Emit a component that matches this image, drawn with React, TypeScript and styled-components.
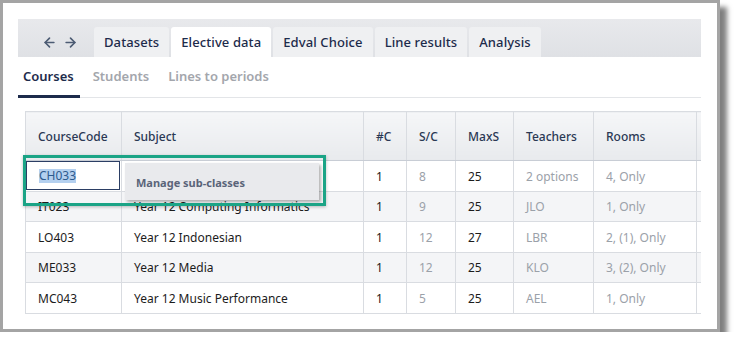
import styled, { createGlobalStyle } from "styled-components";
import { ArrowLeft, ArrowRight } from "lucide-react";

const GlobalStyle = createGlobalStyle`
  * { box-sizing: border-box; }
  body {
    margin: 0;
    background: #ffffff;
    font-family: "Noto Sans", "Open Sans", sans-serif;
  }
`;

interface Course {
  code: string;
  subject: string;
  classes: number;
  perClass: number;
  maxS: number;
  teachers: string;
  rooms: string;
}

const courses: Course[] = [
  { code: "CH033", subject: "", classes: 1, perClass: 8, maxS: 25, teachers: "2 options", rooms: "4, Only" },
  { code: "IT023", subject: "Year 12 Computing Informatics", classes: 1, perClass: 9, maxS: 25, teachers: "JLO", rooms: "1, Only" },
  { code: "LO403", subject: "Year 12 Indonesian", classes: 1, perClass: 12, maxS: 27, teachers: "LBR", rooms: "2, (1), Only" },
  { code: "ME033", subject: "Year 12 Media", classes: 1, perClass: 12, maxS: 25, teachers: "KLO", rooms: "3, (2), Only" },
  { code: "MC043", subject: "Year 12 Music Performance", classes: 1, perClass: 5, maxS: 25, teachers: "AEL", rooms: "1, Only" },
];

const tabs = ["Datasets", "Elective data", "Edval Choice", "Line results", "Analysis"];
const subTabs = ["Courses", "Students", "Lines to periods"];
const columns = ["CourseCode", "Subject", "#C", "S/C", "MaxS", "Teachers", "Rooms", ""];
const widths = [96, 242, 43, 49, 58, 80, 103, 80];

function App() {
  return (
    <>
      <GlobalStyle />
      <Frame>
        <TabBar>
          <NavArrows>
            <ArrowLeft size={15} strokeWidth={2.6} />
            <ArrowRight size={15} strokeWidth={2.6} />
          </NavArrows>
          <Tabs>
            {tabs.map((t) => (
              <Tab key={t} $active={t === "Elective data"}>
                {t}
              </Tab>
            ))}
          </Tabs>
        </TabBar>
        <SubTabs>
          {subTabs.map((t) => (
            <SubTab key={t} $active={t === "Courses"}>
              {t}
            </SubTab>
          ))}
        </SubTabs>
        <TableArea>
          <TableClip>
            <Table>
              <colgroup>
                {widths.map((w, i) => (
                  <col key={i} style={{ width: w }} />
                ))}
              </colgroup>
              <thead>
                <tr>
                  {columns.map((c, i) => (
                    <Th key={i}>{c}</Th>
                  ))}
                </tr>
              </thead>
              <tbody>
                {courses.map((c, i) => (
                  <Row key={c.code} $striped={i % 2 === 1}>
                    <Td>
                      {i === 0 ? (
                        <SelectedCell>
                          <Selection>{c.code}</Selection>
                        </SelectedCell>
                      ) : (
                        c.code
                      )}
                    </Td>
                    <Td>{c.subject}</Td>
                    <Td>{c.classes}</Td>
                    <Td $muted>{c.perClass}</Td>
                    <Td>{c.maxS}</Td>
                    <Td $muted>{c.teachers}</Td>
                    <Td $muted>{c.rooms}</Td>
                    <Td />
                  </Row>
                ))}
              </tbody>
            </Table>
          </TableClip>
          <ContextMenu>Manage sub-classes</ContextMenu>
          <Highlight />
        </TableArea>
      </Frame>
    </>
  );
}

export default App;

const Frame = styled.div`
  width: 720px;
  height: 332px;
  border: 3px solid #a4a4a4;
  background: #ffffff;
  box-shadow: 7px 7px 5px rgba(0, 0, 0, 0.5);
  padding: 16px 16px 0 15px;
`;

const TabBar = styled.div`
  display: flex;
  align-items: flex-end;
  height: 38px;
  background: linear-gradient(to bottom, #e8e9ec, #dfe1e5);
  padding-left: 24px;
`;

const NavArrows = styled.div`
  display: flex;
  align-items: center;
  gap: 6px;
  height: 30px;
  color: #4c5b73;
  margin-right: 16px;
`;

const Tabs = styled.div`
  display: flex;
  gap: 2px;
`;

const Tab = styled.div<{ $active?: boolean }>`
  height: 30px;
  display: flex;
  align-items: center;
  padding: 0 10px;
  border-radius: 3px 3px 0 0;
  background: ${(p) => (p.$active ? "#ffffff" : "#eff0f2")};
  color: #1d2b4b;
  font-size: 13px;
  font-weight: 500;
  letter-spacing: 0.1px;
`;

const SubTabs = styled.div`
  display: flex;
  gap: 8px;
  height: 41px;
  border-bottom: 1px solid #e3e5e8;
`;

const SubTab = styled.div<{ $active?: boolean }>`
  display: flex;
  align-items: center;
  padding: 0 6px 0 5px;
  font-size: 13px;
  font-weight: 600;
  color: ${(p) => (p.$active ? "#1d2b4b" : "#a3a6ac")};
  border-bottom: 3px solid ${(p) => (p.$active ? "#1d2b4b" : "transparent")};
  margin-bottom: -1px;
`;

const TableArea = styled.div`
  position: relative;
  margin: 13px 0 0 7px;
`;

const TableClip = styled.div`
  overflow: hidden;
  width: 676px;
`;

const Table = styled.table`
  table-layout: fixed;
  width: 751px;
  border-collapse: collapse;
  font-size: 12px;
`;

const Th = styled.th`
  height: 49px;
  text-align: left;
  font-weight: 500;
  color: #2a3854;
  padding: 0 12px;
  background: linear-gradient(to bottom, #f5f6f8, #e8eaed);
  border: 1px solid #d9dce1;
  border-bottom-color: #c8cdd5;
`;

const Row = styled.tr<{ $striped?: boolean }>`
  height: 30.5px;
  background: ${(p) => (p.$striped ? "#f4f5f7" : "#ffffff")};
`;

const Td = styled.td<{ $muted?: boolean }>`
  position: relative;
  padding: 1px 12px 0;
  border: 1px solid #d9dce1;
  color: ${(p) => (p.$muted ? "#9ba1a9" : "#1c1c1c")};
  white-space: nowrap;
`;

const SelectedCell = styled.div`
  position: absolute;
  inset: 0 1px 1px 0;
  border: 1.5px solid #2b3e64;
  display: flex;
  align-items: center;
  padding: 2px 0 0 12px;
`;

const Selection = styled.span`
  background: #b4d0ef;
  color: #2d5a8e;
  line-height: 14px;
`;

const ContextMenu = styled.div`
  position: absolute;
  left: 100px;
  top: 52px;
  width: 194px;
  height: 37px;
  background: #e9eaed;
  box-shadow: 2px 2px 3px rgba(0, 0, 0, 0.3);
  padding: 12px 0 0 11px;
  font-size: 11px;
  font-weight: 700;
  color: #5a6479;
`;

const Highlight = styled.div`
  position: absolute;
  left: -2px;
  top: 44px;
  width: 303px;
  height: 51px;
  border: 3px solid #1ba486;
  box-shadow: 0 1px 3px rgba(0, 0, 0, 0.25);
`;
